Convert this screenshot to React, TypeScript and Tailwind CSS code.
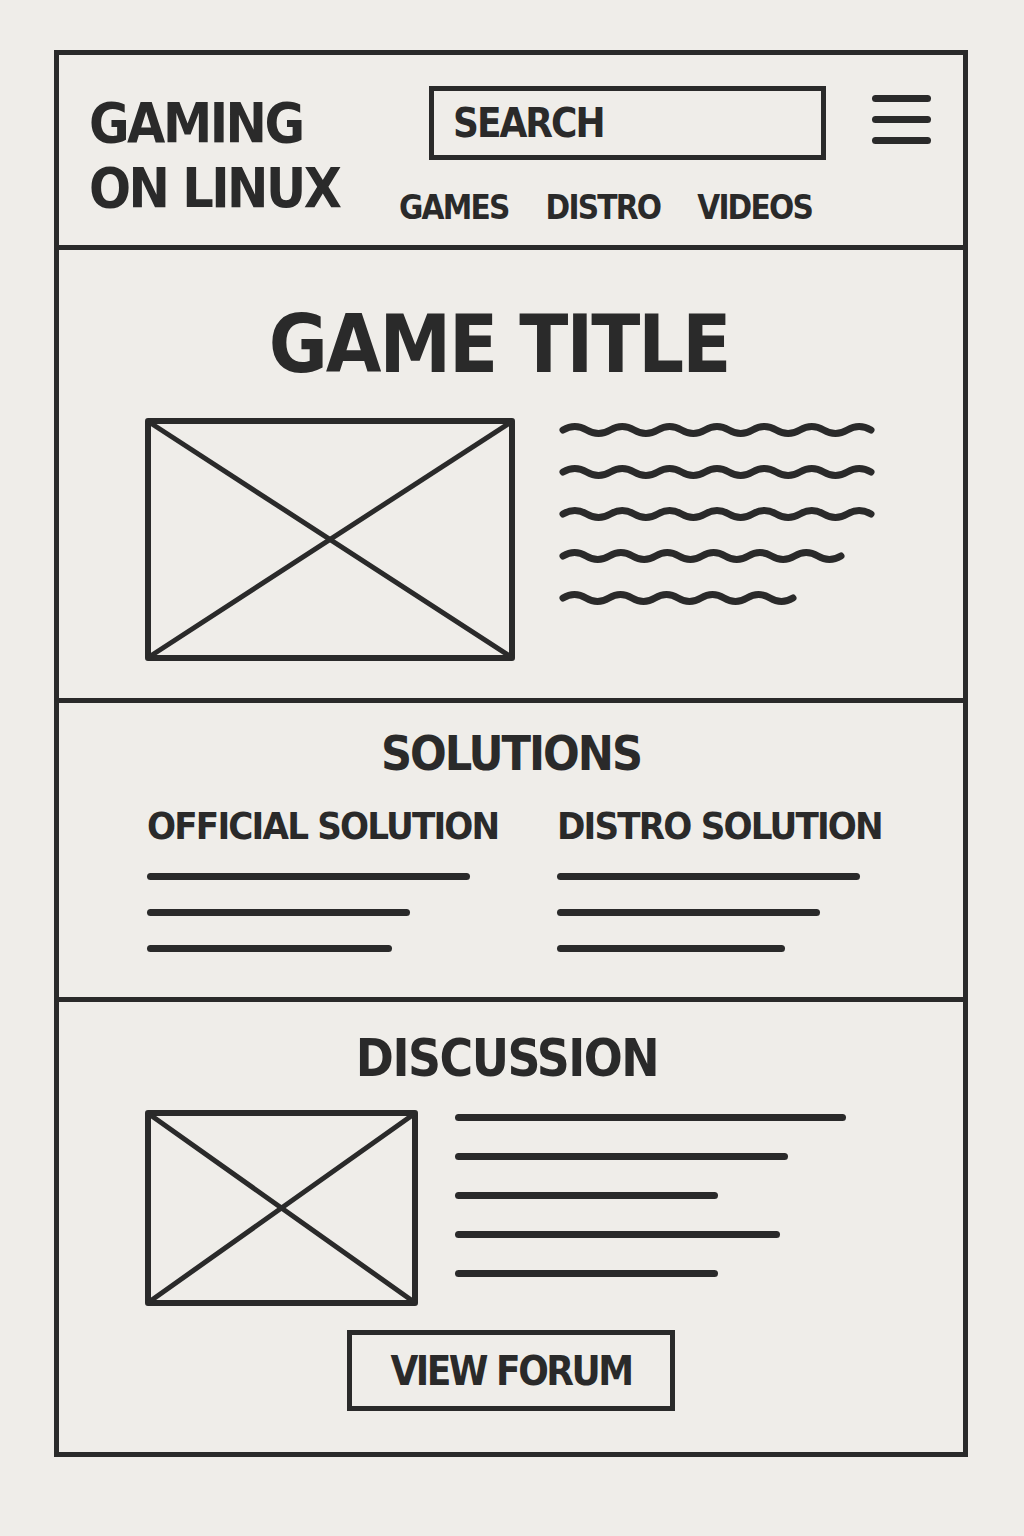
import React from 'react';

const ink = '#2a2a2a';

// hand-drawn style wavy line
const Wave: React.FC<{ width: number }> = ({ width }) => {
  const span = width - 8;
  const n = Math.max(2, Math.round(span / 24));
  const seg = span / n;
  let d = `M 4 10 q ${seg / 2} -7 ${seg} 0`;
  for (let i = 1; i < n; i++) d += ` t ${seg} 0`;
  return (
    <svg width={width} height={20} className="block">
      <path d={d} fill="none" stroke={ink} strokeWidth={7} strokeLinecap="round" strokeLinejoin="round" />
    </svg>
  );
};

const Placeholder: React.FC<{ w: number; h: number }> = ({ w, h }) => (
  <svg width={w} height={h} className="block shrink-0">
    <rect x={3} y={3} width={w - 6} height={h - 6} fill="none" stroke={ink} strokeWidth={6} strokeLinejoin="round" />
    <line x1={4} y1={4} x2={w - 4} y2={h - 4} stroke={ink} strokeWidth={5} strokeLinecap="round" />
    <line x1={w - 4} y1={4} x2={4} y2={h - 4} stroke={ink} strokeWidth={5} strokeLinecap="round" />
  </svg>
);

const Line: React.FC<{ w: number }> = ({ w }) => (
  <div className="h-[7px] rounded-full bg-[#2a2a2a]" style={{ width: w }} />
);

const App: React.FC = () => {
  return (
    <div className="min-h-screen bg-[#efede9] pt-[50px] pb-[77px] text-[#2a2a2a] font-['DejaVu_Sans_Condensed','DejaVu_Sans',sans-serif] font-bold">
      <div className="ml-[54px] w-[914px] border-[5px] border-[#2a2a2a]">
        {/* Header */}
        <header className="h-[195px] border-b-[5px] border-[#2a2a2a] flex">
          <div className="ml-[30px] mt-[36px] w-[310px] text-[55px] leading-[65px] tracking-[-2.5px]">
            <div>GAMING</div>
            <div>ON LINUX</div>
          </div>
          <div className="flex flex-col">
            <div className="flex items-start mt-[31px]">
              <div className="ml-[30px] w-[397px] h-[74px] border-[5px] border-[#2a2a2a] flex items-center pl-[19px] text-[40px] tracking-[-2px]">
                SEARCH
              </div>
              <div className="ml-[46px] mt-[9px] flex flex-col gap-[14px]">
                <div className="w-[59px] h-[7px] rounded-full bg-[#2a2a2a]" />
                <div className="w-[59px] h-[7px] rounded-full bg-[#2a2a2a]" />
                <div className="w-[59px] h-[7px] rounded-full bg-[#2a2a2a]" />
              </div>
            </div>
            <nav className="flex gap-[37px] mt-[31px] text-[33px] leading-none tracking-[-1.8px]">
              <span>GAMES</span>
              <span>DISTRO</span>
              <span>VIDEOS</span>
            </nav>
          </div>
        </header>

        {/* Game title */}
        <section className="h-[453px] border-b-[5px] border-[#2a2a2a] pt-[55px]">
          <h1 className="text-center pr-[24px] text-[80px] leading-[80px] tracking-[-2px]">GAME TITLE</h1>
          <div className="flex mt-[33px] ml-[86px]">
            <Placeholder w={370} h={243} />
            <div className="ml-[44px] mt-[2px] flex flex-col gap-[22px]">
              <Wave width={316} />
              <Wave width={316} />
              <Wave width={316} />
              <Wave width={286} />
              <Wave width={238} />
            </div>
          </div>
        </section>

        {/* Solutions */}
        <section className="h-[299px] border-b-[5px] border-[#2a2a2a] pt-[26px]">
          <h2 className="text-center text-[48px] leading-[48px] tracking-[-2px]">SOLUTIONS</h2>
          <div className="flex ml-[88px] mt-[29px]">
            <div className="w-[410px]">
              <h3 className="text-[38px] leading-[41px] tracking-[-1.8px]">OFFICIAL SOLUTION</h3>
              <div className="mt-[26px] flex flex-col gap-[29px]">
                <Line w={323} />
                <Line w={263} />
                <Line w={245} />
              </div>
            </div>
            <div>
              <h3 className="text-[38px] leading-[41px] tracking-[-1.8px]">DISTRO SOLUTION</h3>
              <div className="mt-[26px] flex flex-col gap-[29px]">
                <Line w={303} />
                <Line w={263} />
                <Line w={228} />
              </div>
            </div>
          </div>
        </section>

        {/* Discussion */}
        <section className="h-[450px] pt-[29px]">
          <h2 className="text-center pr-[8px] text-[51px] leading-[55px] tracking-[-1.5px]">DISCUSSION</h2>
          <div className="flex ml-[86px] mt-[24px]">
            <Placeholder w={273} h={196} />
            <div className="ml-[37px] mt-[4px] flex flex-col gap-[32px]">
              <Line w={391} />
              <Line w={333} />
              <Line w={263} />
              <Line w={325} />
              <Line w={263} />
            </div>
          </div>
          <div className="flex justify-center mt-[24px]">
            <button className="w-[328px] h-[81px] border-[5px] border-[#2a2a2a] text-[40px] tracking-[-2.5px] font-bold">
              VIEW FORUM
            </button>
          </div>
        </section>
      </div>
    </div>
  );
};

export default App;
